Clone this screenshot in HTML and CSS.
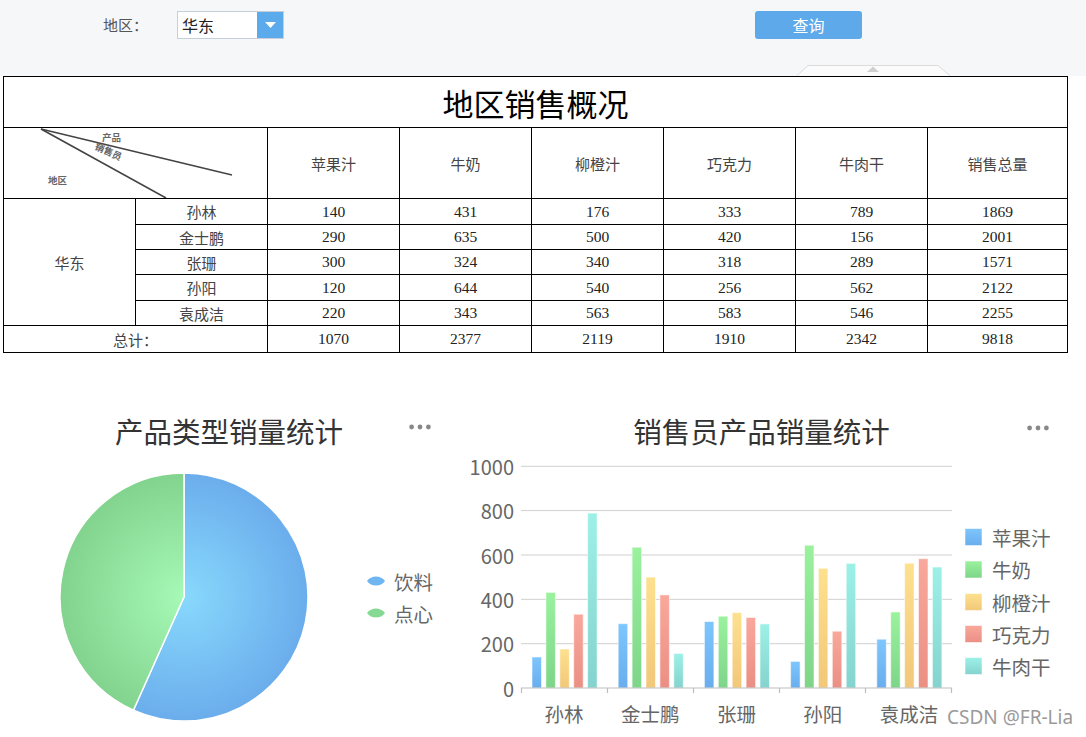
FILE: index.html
```html
<!DOCTYPE html>
<html lang="zh">
<head>
<meta charset="utf-8">
<title>地区销售概况</title>
<link rel="stylesheet" href="styles.css">
</head>
<body>
<div class="toolbar">
  <div class="controls">
    <span class="label">地区：</span>
    <div class="select">
      <span class="select-value">华东</span>
      <span class="select-btn"><svg width="11" height="6" viewBox="0 0 11 6"><path d="M0 0 H11 L5.5 6 Z" fill="#fff"/></svg></span>
    </div>
    <button class="query">查询</button>
  </div>
  <svg class="handle" width="155" height="11" viewBox="0 0 155 11">
    <path d="M0.5 11 L12 0.5 H142 L154.5 11" fill="#fbfbfc" stroke="#dcdcdc"/>
    <path d="M71 7 L77 1.5 L83 7 Z" fill="#cfcfcf"/>
  </svg>
</div>

<table class="report">
  <colgroup>
    <col class="c1"><col class="c1"><col class="c1"><col class="c1"><col class="c1"><col class="c1"><col class="c1"><col class="c2">
  </colgroup>
  <tr class="r-title"><td colspan="8" class="title">地区销售概况</td></tr>
  <tr class="r-head">
    <td colspan="2" class="diag">
      <svg class="diag-svg" width="263" height="70" viewBox="0 0 263 70">
        <line x1="37" y1="1" x2="228" y2="47" stroke="#444" stroke-width="1.6"/>
        <line x1="37" y1="1" x2="162" y2="70" stroke="#444" stroke-width="1.6"/>
        <text x="98" y="13" class="diag-t">产品</text>
        <text x="90" y="21" class="diag-t" transform="rotate(24 90 21)">销售员</text>
        <text x="44" y="56" class="diag-t">地区</text>
      </svg>
    </td>
    <td class="hd">苹果汁</td><td class="hd">牛奶</td><td class="hd">柳橙汁</td><td class="hd">巧克力</td><td class="hd">牛肉干</td><td class="hd">销售总量</td>
  </tr>
  <tr class="r1"><td rowspan="5" class="cjk">华东</td><td class="cjk">孙林</td><td>140</td><td>431</td><td>176</td><td>333</td><td>789</td><td>1869</td></tr>
  <tr class="r2"><td class="cjk">金士鹏</td><td>290</td><td>635</td><td>500</td><td>420</td><td>156</td><td>2001</td></tr>
  <tr class="r3"><td class="cjk">张珊</td><td>300</td><td>324</td><td>340</td><td>318</td><td>289</td><td>1571</td></tr>
  <tr class="r4"><td class="cjk">孙阳</td><td>120</td><td>644</td><td>540</td><td>256</td><td>562</td><td>2122</td></tr>
  <tr class="r5"><td class="cjk">袁成洁</td><td>220</td><td>343</td><td>563</td><td>583</td><td>546</td><td>2255</td></tr>
  <tr class="r6"><td colspan="2" class="cjk">总计：</td><td>1070</td><td>2377</td><td>2119</td><td>1910</td><td>2342</td><td>9818</td></tr>
</table>

<div class="charts">
  <section class="panel panel-pie">
    <header class="chart-head">
      <span></span>
      <h2 class="chart-title">产品类型销量统计</h2>
      <svg class="dots" width="22" height="6" viewBox="0 0 22 6"><circle cx="2.6" cy="3" r="2.4"/><circle cx="11" cy="3" r="2.4"/><circle cx="19.4" cy="3" r="2.4"/></svg>
    </header>
    <svg class="chart" width="450" height="287" viewBox="0 0 450 287">
      <defs>
        <radialGradient id="pb" cx="184" cy="146" r="124" gradientUnits="userSpaceOnUse">
          <stop offset="0" stop-color="#88d9fd"/>
          <stop offset="1" stop-color="#6badec"/>
        </radialGradient>
        <radialGradient id="pg" cx="184" cy="146" r="124" gradientUnits="userSpaceOnUse">
          <stop offset="0" stop-color="#a6f9b6"/>
          <stop offset="1" stop-color="#82d38e"/>
        </radialGradient>
      </defs>
      <path d="M184 146 L184 22 A124 124 0 1 1 133.4 259.2 Z" fill="url(#pb)" stroke="#fff" stroke-width="1.5" stroke-linejoin="round"/>
      <path d="M184 146 L133.4 259.2 A124 124 0 0 1 184 22 Z" fill="url(#pg)" stroke="#fff" stroke-width="1.5" stroke-linejoin="round"/>
      <path d="M367 130 C371 124 381 124 385 130 C381 136 371 136 367 130 Z" fill="#6fb5f0"/>
      <path d="M367 162 C371 156 381 156 385 162 C381 168 371 168 367 162 Z" fill="#86d993"/>
      <text x="394" y="130" class="lg">饮料</text>
      <text x="394" y="162" class="lg">点心</text>
    </svg>
  </section>

  <section class="panel panel-bar">
    <header class="chart-head">
      <span></span>
      <h2 class="chart-title">销售员产品销量统计</h2>
      <svg class="dots" width="22" height="6" viewBox="0 0 22 6"><circle cx="2.6" cy="3" r="2.4"/><circle cx="11" cy="3" r="2.4"/><circle cx="19.4" cy="3" r="2.4"/></svg>
    </header>
    <svg class="chart" width="636" height="287" viewBox="0 0 636 287">
      <defs>
        <linearGradient id="gb" x1="0" y1="0" x2="0" y2="1"><stop offset="0" stop-color="#7ec6fd"/><stop offset="1" stop-color="#69adee"/></linearGradient>
        <linearGradient id="gg" x1="0" y1="0" x2="0" y2="1"><stop offset="0" stop-color="#9af29d"/><stop offset="1" stop-color="#7ed589"/></linearGradient>
        <linearGradient id="gy" x1="0" y1="0" x2="0" y2="1"><stop offset="0" stop-color="#fde18e"/><stop offset="1" stop-color="#f2c77a"/></linearGradient>
        <linearGradient id="gr" x1="0" y1="0" x2="0" y2="1"><stop offset="0" stop-color="#f9a89c"/><stop offset="1" stop-color="#eb8f84"/></linearGradient>
        <linearGradient id="gc" x1="0" y1="0" x2="0" y2="1"><stop offset="0" stop-color="#9cf1e7"/><stop offset="1" stop-color="#85d3ce"/></linearGradient>
      </defs>
      <g class="grid">
        <line x1="71" y1="15.3" x2="502" y2="15.3"/>
        <line x1="71" y1="59.6" x2="502" y2="59.6"/>
        <line x1="71" y1="104" x2="502" y2="104"/>
        <line x1="71" y1="148.3" x2="502" y2="148.3"/>
        <line x1="71" y1="192.7" x2="502" y2="192.7"/>
      </g>
      <g class="ylab">
        <text x="64" y="15.3">1000</text>
        <text x="64" y="59.6">800</text>
        <text x="64" y="104">600</text>
        <text x="64" y="148.3">400</text>
        <text x="64" y="192.7">200</text>
        <text x="64" y="237">0</text>
      </g>
      <g class="bars">
        <rect x="82" y="206" width="9.5" height="31" fill="url(#gb)"/>
        <rect x="95.9" y="141.4" width="9.5" height="95.6" fill="url(#gg)"/>
        <rect x="109.8" y="198" width="9.5" height="39" fill="url(#gy)"/>
        <rect x="123.7" y="163.2" width="9.5" height="73.8" fill="url(#gr)"/>
        <rect x="137.6" y="62.1" width="9.5" height="174.9" fill="url(#gc)"/>

        <rect x="168.2" y="172.7" width="9.5" height="64.3" fill="url(#gb)"/>
        <rect x="182.1" y="96.2" width="9.5" height="140.8" fill="url(#gg)"/>
        <rect x="196" y="126.1" width="9.5" height="110.9" fill="url(#gy)"/>
        <rect x="209.9" y="143.9" width="9.5" height="93.1" fill="url(#gr)"/>
        <rect x="223.8" y="202.4" width="9.5" height="34.6" fill="url(#gc)"/>

        <rect x="254.4" y="170.5" width="9.5" height="66.5" fill="url(#gb)"/>
        <rect x="268.3" y="165.2" width="9.5" height="71.8" fill="url(#gg)"/>
        <rect x="282.2" y="161.6" width="9.5" height="75.4" fill="url(#gy)"/>
        <rect x="296.1" y="166.5" width="9.5" height="70.5" fill="url(#gr)"/>
        <rect x="310" y="172.9" width="9.5" height="64.1" fill="url(#gc)"/>

        <rect x="340.6" y="210.4" width="9.5" height="26.6" fill="url(#gb)"/>
        <rect x="354.5" y="94.2" width="9.5" height="142.8" fill="url(#gg)"/>
        <rect x="368.4" y="117.3" width="9.5" height="119.7" fill="url(#gy)"/>
        <rect x="382.3" y="180.2" width="9.5" height="56.8" fill="url(#gr)"/>
        <rect x="396.2" y="112.4" width="9.5" height="124.6" fill="url(#gc)"/>

        <rect x="426.8" y="188.2" width="9.5" height="48.8" fill="url(#gb)"/>
        <rect x="440.7" y="161" width="9.5" height="76" fill="url(#gg)"/>
        <rect x="454.6" y="112.2" width="9.5" height="124.8" fill="url(#gy)"/>
        <rect x="468.5" y="107.7" width="9.5" height="129.3" fill="url(#gr)"/>
        <rect x="482.4" y="116" width="9.5" height="121" fill="url(#gc)"/>
      </g>
      <g class="axis">
        <line x1="71" y1="237" x2="502" y2="237"/>
        <line x1="71.5" y1="237" x2="71.5" y2="242"/>
        <line x1="157.5" y1="237" x2="157.5" y2="242"/>
        <line x1="243.5" y1="237" x2="243.5" y2="242"/>
        <line x1="329.5" y1="237" x2="329.5" y2="242"/>
        <line x1="415.5" y1="237" x2="415.5" y2="242"/>
        <line x1="501.5" y1="237" x2="501.5" y2="242"/>
      </g>
      <g class="xlab">
        <text x="114.1" y="262">孙林</text>
        <text x="200.3" y="262">金士鹏</text>
        <text x="286.5" y="262">张珊</text>
        <text x="372.7" y="262">孙阳</text>
        <text x="458.9" y="262">袁成洁</text>
      </g>
      <g class="legend">
        <rect x="515" y="77.5" width="17" height="17" fill="url(#gb)"/>
        <rect x="515" y="110" width="17" height="17" fill="url(#gg)"/>
        <rect x="515" y="142.5" width="17" height="17" fill="url(#gy)"/>
        <rect x="515" y="174.5" width="17" height="17" fill="url(#gr)"/>
        <rect x="515" y="206.5" width="17" height="17" fill="url(#gc)"/>
        <text x="542" y="86" class="lg">苹果汁</text>
        <text x="542" y="118.5" class="lg">牛奶</text>
        <text x="542" y="151" class="lg">柳橙汁</text>
        <text x="542" y="183" class="lg">巧克力</text>
        <text x="542" y="215" class="lg">牛肉干</text>
      </g>
      <text x="497" y="266" class="mark">CSDN @FR-Lia</text>
    </svg>
  </section>
</div>
</body>
</html>
```

FILE: styles.css
```css
html, body {
  margin: 0;
  padding: 0;
  background: #fff;
}

body {
  width: 1086px;
  height: 737px;
  overflow: hidden;
  font-family: "Noto Sans CJK SC", "Noto Sans", sans-serif;
}

.toolbar {
  height: 76px;
  background: #f6f7f9;
  display: flex;
  flex-direction: column;
}

.controls {
  display: flex;
  align-items: center;
  height: 28px;
  margin-top: 11px;
  padding-left: 103px;
}

.label {
  width: 74px;
  font-size: 15px;
  color: #555;
  line-height: 28px;
}

.select {
  width: 107px;
  height: 28px;
  box-sizing: border-box;
  border: 1px solid #c6cedb;
  background: #fff;
  display: flex;
}

.select-value {
  flex: 1;
  padding-left: 4px;
  font-size: 16px;
  line-height: 26px;
  color: #222;
}

.select-btn {
  width: 26px;
  background: #5aaaec;
  display: flex;
  align-items: center;
  justify-content: center;
}

.select-btn svg {
  display: block;
}

.query {
  margin-left: 471px;
  width: 107px;
  height: 28px;
  border: 0;
  border-radius: 3px;
  background: #5ea9ea;
  color: #fff;
  font-family: "Noto Sans CJK SC", sans-serif;
  font-size: 16px;
  padding: 0;
}

.handle {
  display: block;
  margin-top: auto;
  margin-left: 796px;
}

.report {
  border-collapse: collapse;
  table-layout: fixed;
  width: 1065px;
  margin-left: 3px;
  font-family: "Liberation Serif", "Noto Sans CJK SC", serif;
  font-size: 15.5px;
  color: #222;
}

.report col.c1 { width: 132px; }
.report col.c2 { width: 140px; }

.report td {
  border: 1px solid #000;
  text-align: center;
  padding: 0;
  line-height: 1;
}

.r-title td { height: 50px; }
.r-head td { height: 70px; }
.r1 td { height: 25px; }
.r2 td { height: 24px; }
.r3 td { height: 24px; }
.r4 td { height: 25px; }
.r5 td { height: 24px; }
.r6 td { height: 26px; }

.report td.title {
  font-family: "Noto Sans CJK SC", sans-serif;
  font-size: 31px;
  color: #000;
}

.report td.hd {
  font-family: "Noto Sans CJK SC", sans-serif;
  font-size: 15px;
  color: #444;
}

.report td.cjk {
  font-family: "Noto Sans CJK SC", sans-serif;
  font-size: 15px;
  color: #444;
}

.report td.diag {
  vertical-align: top;
}

.diag-svg {
  display: block;
}

.diag-t {
  font-family: "Noto Sans CJK SC", sans-serif;
  font-size: 9.5px;
  font-weight: 700;
  fill: #666;
}

.charts {
  display: flex;
  margin-top: 58px;
}

.panel-pie { width: 450px; }
.panel-bar { width: 636px; }

.chart-head {
  display: grid;
  grid-template-columns: 1fr auto 1fr;
  height: 40px;
}

.panel-pie .chart-head { padding-left: 8px; }
.panel-bar .chart-head { padding-right: 13px; }

.chart-title {
  margin: 0;
  font-size: 28.5px;
  font-weight: 400;
  line-height: 40px;
  color: #333;
  white-space: nowrap;
}

.dots {
  justify-self: end;
  margin-top: 13px;
  fill: #888;
}

.panel-pie .dots { margin-right: 19px; }
.panel-bar .dots { margin-right: 24px; margin-top: 14px; }

.chart {
  display: block;
  font-family: "Noto Sans CJK SC", "Noto Sans", sans-serif;
}

.chart .lg {
  font-size: 19.5px;
  fill: #666;
  dominant-baseline: central;
}

.grid line {
  stroke: #cfcfcf;
  stroke-width: 1;
}

.axis line {
  stroke: #bdbdbd;
  stroke-width: 1.2;
}

.ylab text {
  font-size: 20px;
  fill: #666;
  text-anchor: end;
  dominant-baseline: central;
}

.xlab text {
  font-size: 19.5px;
  fill: #666;
  text-anchor: middle;
  dominant-baseline: central;
}

.bars rect,
.legend rect {
  stroke: rgba(255, 255, 255, 0.55);
  stroke-width: 1;
}

.mark {
  font-family: "Noto Sans", sans-serif;
  font-size: 19px;
  fill: #9a9a9a;
  dominant-baseline: central;
}
```
